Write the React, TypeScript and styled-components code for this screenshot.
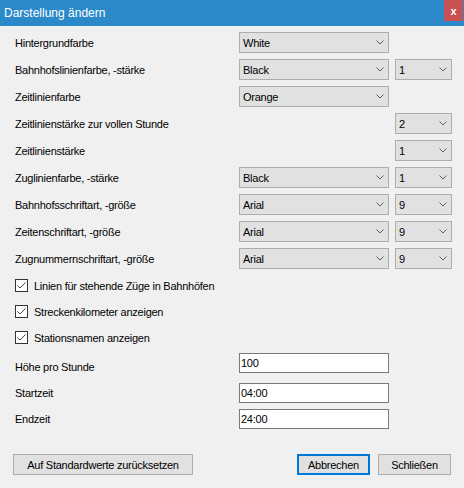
import React from "react";
import styled, { createGlobalStyle } from "styled-components";

const Global = createGlobalStyle`
  html, body { margin: 0; padding: 0; background: #f0f0f0; }
  body {
    font-family: "Liberation Sans", Arial, sans-serif;
    font-size: 11px;
    color: #000;
  }
  * { box-sizing: border-box; }
`;

const Window = styled.div`
  width: 464px;
  height: 488px;
  background: #f0f0f0;
  display: flex;
  flex-direction: column;
  overflow: hidden;
`;

const TitleBar = styled.div`
  height: 26px;
  flex: none;
  background: #2b89ca;
  display: flex;
  align-items: flex-start;
  justify-content: space-between;
`;

const Title = styled.span`
  color: #fff;
  font-size: 12px;
  line-height: 26px;
  padding-left: 4px;
`;

const CloseButton = styled.div`
  width: 19px;
  height: 21px;
  margin-right: 1px;
  background: #c75050;
  color: #fff;
  font-weight: bold;
  font-size: 11px;
  display: flex;
  align-items: center;
  justify-content: center;
`;

const Form = styled.div`
  padding: 6px 12px 0 15px;
  display: flex;
  flex-direction: column;
`;

const Grid = styled.div`
  display: grid;
  grid-template-columns: 218px 150px 57px;
  grid-auto-rows: 21px;
  column-gap: 6px;
  row-gap: 6px;
`;

const Label = styled.div<{ $shift?: number }>`
  grid-column: 1;
  align-self: center;
  white-space: nowrap;
  letter-spacing: -0.25px;
  position: relative;
  top: ${(p) => p.$shift ?? 0}px;
`;

const ComboBox = styled.div<{ $col: number }>`
  grid-column: ${(p) => p.$col};
  height: 21px;
  background: #e1e1e1;
  border: 1px solid #adadad;
  display: flex;
  align-items: center;
  justify-content: space-between;
  padding: 0 4px 0 3px;
  letter-spacing: -0.25px;
`;

const Chevron = () => (
  <svg width="8" height="5" viewBox="0 0 8 5">
    <path d="M0.5 0.5 L4 4 L7.5 0.5" fill="none" stroke="#606060" strokeWidth="1" />
  </svg>
);

const Checks = styled.div`
  margin-top: 10px;
  display: flex;
  flex-direction: column;
  gap: 13px;
`;

const CheckRow = styled.label`
  display: flex;
  align-items: center;
  height: 13px;
  gap: 6px;
  letter-spacing: -0.25px;
  white-space: nowrap;
`;

const Box = styled.span`
  width: 13px;
  height: 13px;
  border: 1px solid #333;
  background: #fff;
  display: flex;
  align-items: center;
  justify-content: center;
  flex: none;
`;

const Fields = styled.div`
  margin-top: 9px;
  display: flex;
  flex-direction: column;
`;

const FieldRow = styled.div<{ $gap: number }>`
  display: grid;
  grid-template-columns: 224px 150px;
  height: 20px;
  margin-top: ${(p) => p.$gap}px;
`;

const TextBox = styled.div`
  height: 20px;
  background: #fff;
  border: 1px solid #7a7a7a;
  padding-left: 1px;
  display: flex;
  align-items: center;
  letter-spacing: -0.25px;
`;

const Footer = styled.div`
  margin-top: 25px;
  padding: 0 13px;
  display: flex;
  align-items: center;
`;

const Button = styled.div<{ $width: number; $default?: boolean }>`
  width: ${(p) => p.$width}px;
  height: 21px;
  background: #e1e1e1;
  border: ${(p) => (p.$default ? "2px solid #0078d7" : "1px solid #adadad")};
  display: flex;
  align-items: center;
  justify-content: center;
  letter-spacing: -0.25px;
  white-space: nowrap;
`;

const Spacer = styled.div`
  flex: 1;
`;

const ButtonGap = styled.div`
  width: 8px;
`;

type Row = { label: string; main?: string; small?: string };

const rows: Row[] = [
  { label: "Hintergrundfarbe", main: "White" },
  { label: "Bahnhofslinienfarbe, -stärke", main: "Black", small: "1" },
  { label: "Zeitlinienfarbe", main: "Orange" },
  { label: "Zeitlinienstärke zur vollen Stunde", small: "2" },
  { label: "Zeitlinienstärke", small: "1" },
  { label: "Zuglinienfarbe, -stärke", main: "Black", small: "1" },
  { label: "Bahnhofsschriftart, -größe", main: "Arial", small: "9" },
  { label: "Zeitenschriftart, -größe", main: "Arial", small: "9" },
  { label: "Zugnummernschriftart, -größe", main: "Arial", small: "9" },
];

const checks = [
  "Linien für stehende Züge in Bahnhöfen",
  "Streckenkilometer anzeigen",
  "Stationsnamen anzeigen",
];

const fields = [
  { label: "Höhe pro Stunde", value: "100", gap: 0, shift: 4 },
  { label: "Startzeit", value: "04:00", gap: 10, shift: 0 },
  { label: "Endzeit", value: "24:00", gap: 6, shift: 0 },
];

const Check = () => (
  <svg width="9" height="7" viewBox="0 0 9 7">
    <path d="M0.5 3.5 L3 6 L8.5 0.5" fill="none" stroke="#444" strokeWidth="1" />
  </svg>
);

export default function App() {
  return (
    <Window>
      <Global />
      <TitleBar>
        <Title>Darstellung ändern</Title>
        <CloseButton>x</CloseButton>
      </TitleBar>
      <Form>
        <Grid>
          {rows.map((r) => (
            <React.Fragment key={r.label}>
              <Label>{r.label}</Label>
              {r.main && (
                <ComboBox $col={2}>
                  <span>{r.main}</span>
                  <Chevron />
                </ComboBox>
              )}
              {r.small && (
                <ComboBox $col={3}>
                  <span>{r.small}</span>
                  <Chevron />
                </ComboBox>
              )}
            </React.Fragment>
          ))}
        </Grid>
        <Checks>
          {checks.map((c) => (
            <CheckRow key={c}>
              <Box>
                <Check />
              </Box>
              {c}
            </CheckRow>
          ))}
        </Checks>
        <Fields>
          {fields.map((f) => (
            <FieldRow key={f.label} $gap={f.gap}>
              <Label $shift={f.shift}>{f.label}</Label>
              <TextBox>{f.value}</TextBox>
            </FieldRow>
          ))}
        </Fields>
      </Form>
      <Footer>
        <Button $width={180}>Auf Standardwerte zurücksetzen</Button>
        <Spacer />
        <Button $width={73} $default>
          Abbrechen
        </Button>
        <ButtonGap />
        <Button $width={73}>Schließen</Button>
      </Footer>
    </Window>
  );
}
